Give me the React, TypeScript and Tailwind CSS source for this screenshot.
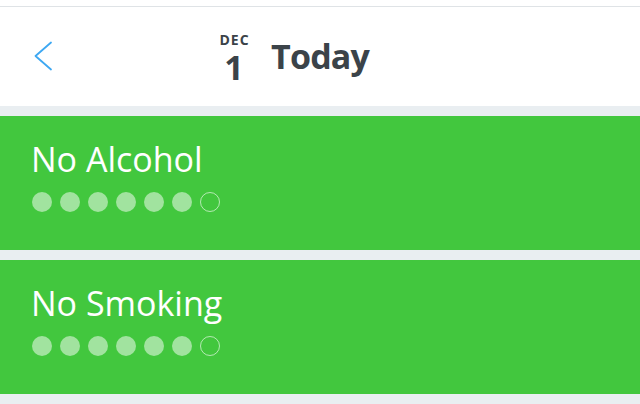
import React from 'react';

const habits = [
    { name: 'No Alcohol', done: 6, total: 7 },
    { name: 'No Smoking', done: 6, total: 7 },
];

const HabitCard = ({ name, done, total }: { name: string; done: number; total: number }) => {
    return (
        <div className="h-[134px] bg-[#42c73e] pl-[31px] pt-[20px]">
            <h3 className="text-[34px] leading-[46px] font-normal text-white">{name}</h3>
            <div className="flex gap-[8px] mt-[10px] pl-[1px]">
                {Array.from({ length: total }).map((_, i) =>
                    i < done ? (
                        <span key={i} className="w-[20px] h-[20px] rounded-full bg-white/50"></span>
                    ) : (
                        <span key={i} className="w-[20px] h-[20px] rounded-full border border-white/60"></span>
                    )
                )}
            </div>
        </div>
    );
};

export default function App() {
    return (
        <div className="w-[640px] h-[404px] overflow-hidden bg-[#e9eef1] font-['Open_Sans',sans-serif]">
            <div className="h-[6px] bg-white"></div>
            <header className="h-[100px] bg-white border-t border-[#dfe3e6] flex items-start">
                <button className="ml-[33px] mt-[34px] w-[20px] h-[30px] flex items-center justify-center">
                    <svg width="20" height="30" viewBox="0 0 20 30" fill="none">
                        <path d="M18 1.5 L2.5 15 L18 28.5" stroke="#3ea8f2" strokeWidth="1.8" strokeLinecap="round" strokeLinejoin="round" />
                    </svg>
                </button>
                <div className="ml-[161px] w-[40px] flex flex-col items-center">
                    <span className="mt-[26px] text-[14px] leading-[14px] font-bold text-[#3b4349] tracking-[1px] pl-[1px]">DEC</span>
                    <span className="mt-[3px] text-[34px] leading-[34px] font-bold text-[#3b4349]">1</span>
                </div>
                <h1 className="ml-[17px] mt-[32px] text-[34px] leading-[34px] font-bold text-[#3b4349] tracking-[-0.8px]">Today</h1>
            </header>
            <div className="flex flex-col gap-[10px] pt-[10px]">
                {habits.map((h) => (
                    <HabitCard key={h.name} {...h} />
                ))}
            </div>
        </div>
    );
}
